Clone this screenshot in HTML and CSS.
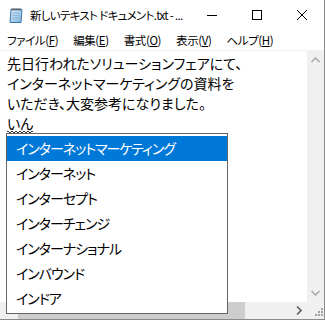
FILE: index.html
```html
<!DOCTYPE html>
<html lang="ja">
<head>
    <meta charset="UTF-8">
    <title>新しいテキスト ドキュメント.txt - メモ帳</title>
    <link rel="stylesheet" href="styles.css">
</head>
<body>

    <div class="window">

        <!-- Title bar -->
        <div class="titlebar">
            <svg class="app-icon" width="16" height="16" viewBox="0 0 16 16">
                <defs>
                    <linearGradient id="page" x1="0" y1="0" x2="1" y2="1">
                        <stop offset="0" stop-color="#d6ebfa"/>
                        <stop offset="1" stop-color="#7fb2dc"/>
                    </linearGradient>
                </defs>
                <path d="M3 2.5 H14 L13 15.5 H2 Z" fill="url(#page)" stroke="#3f76a8" stroke-width="1"/>
                <path d="M4.5 6 H11.5 M4.3 8.5 H11.3 M4.1 11 H11.1" stroke="#8fb6d6" stroke-width="1"/>
                <path d="M4 1 V3.5 M6 1 V3.5 M8 1 V3.5 M10 1 V3.5 M12 1 V3.5" stroke="#555" stroke-width="1"/>
            </svg>
            <span class="title">新しいテキスト ドキュメント.txt - ...</span>
            <div class="caption-buttons">
                <span class="cap-btn">
                    <svg width="10" height="10" viewBox="0 0 10 10"><path d="M0 5.5 H10" stroke="#000" stroke-width="1"/></svg>
                </span>
                <span class="cap-btn">
                    <svg width="10" height="10" viewBox="0 0 10 10"><rect x="0.5" y="0.5" width="9" height="9" fill="none" stroke="#000" stroke-width="1"/></svg>
                </span>
                <span class="cap-btn">
                    <svg width="10" height="10" viewBox="0 0 10 10"><path d="M0 0 L10 10 M10 0 L0 10" stroke="#000" stroke-width="1"/></svg>
                </span>
            </div>
        </div>

        <!-- Menu bar -->
        <ul class="menubar">
            <li>ファイル(<u>F</u>)</li>
            <li>編集(<u>E</u>)</li>
            <li>書式(<u>O</u>)</li>
            <li>表示(<u>V</u>)</li>
            <li>ヘルプ(<u>H</u>)</li>
        </ul>

        <!-- Edit area with scroll bars -->
        <div class="client">
            <div class="edit-text">
                <div>先日行われたソリューションフェアにて、</div>
                <div>インターネットマーケティングの資料を</div>
                <div>いただき、大変参考になりました。</div>
                <div><span class="composing">いん</span></div>
            </div>
            <div class="vscroll">
                <svg width="9" height="6" viewBox="0 0 9 6"><path d="M0.5 5 L4.5 1 L8.5 5" fill="none" stroke="#a3a3a3" stroke-width="1.4"/></svg>
                <svg width="9" height="6" viewBox="0 0 9 6"><path d="M0.5 1 L4.5 5 L8.5 1" fill="none" stroke="#a3a3a3" stroke-width="1.4"/></svg>
            </div>
            <div class="hscroll">
                <span class="hthumb"></span>
                <svg width="6" height="9" viewBox="0 0 6 9"><path d="M1 0.5 L5 4.5 L1 8.5" fill="none" stroke="#606060" stroke-width="1.6"/></svg>
            </div>
            <div class="grip">
                <svg width="12" height="12" viewBox="0 0 12 12" fill="#a0a0a0">
                    <rect x="9" y="1" width="2" height="2"/>
                    <rect x="6" y="4" width="2" height="2"/><rect x="9" y="4" width="2" height="2"/>
                    <rect x="3" y="7" width="2" height="2"/><rect x="6" y="7" width="2" height="2"/><rect x="9" y="7" width="2" height="2"/>
                </svg>
            </div>
        </div>

        <!-- IME candidate list -->
        <ul class="candidates">
            <li class="selected">インターネットマーケティング</li>
            <li>インターネット</li>
            <li>インターセプト</li>
            <li>インターチェンジ</li>
            <li>インターナショナル</li>
            <li>インバウンド</li>
            <li>インドア</li>
        </ul>

    </div>

</body>
</html>
```

FILE: styles.css
```css
/* General */
body {
    margin: 0;
    font-family: "Noto Sans CJK JP", "Noto Sans", sans-serif;
    font-feature-settings: "palt";
    color: #000;
    background-color: #fff;
}

.window {
    position: relative;
    width: 325px;
    height: 320px;
    box-sizing: border-box;
    border-right: 1px solid #8a8a8a;
    border-bottom: 1px solid #8a8a8a;
    display: flex;
    flex-direction: column;
    overflow: hidden;
}

/* Title bar */
.titlebar {
    height: 30px;
    display: flex;
    align-items: center;
    flex-shrink: 0;
}

.app-icon {
    flex-shrink: 0;
    margin-left: 8px;
    margin-right: 6px;
}

.title {
    font-size: 11.5px;
    letter-spacing: -0.7px;
    flex: 1;
    white-space: nowrap;
}

.caption-buttons {
    display: flex;
    height: 100%;
    flex-shrink: 0;
}

.cap-btn {
    width: 45px;
    display: flex;
    align-items: center;
    justify-content: center;
}

/* Menu bar */
.menubar {
    list-style: none;
    margin: 0;
    padding: 0;
    height: 20px;
    display: flex;
    align-items: center;
    font-size: 11.5px;
    letter-spacing: -0.4px;
    border-bottom: 1px solid #f0f0f0;
    flex-shrink: 0;
}

.menubar li {
    padding: 0 7px;
    margin-right: 1px;
}

/* Client area */
.client {
    flex: 1;
    display: grid;
    grid-template-columns: 1fr 17px;
    grid-template-rows: 1fr 17px;
}

.edit-text {
    padding: 2px 7px 0;
    font-size: 14px;
    line-height: 20px;
    white-space: nowrap;
    overflow: hidden;
}

/* IME composition string: dotted wavy underline */
.composing {
    display: inline-block;
    line-height: 16px;
    padding-bottom: 2px;
    background-image:
        linear-gradient(45deg, transparent 35%, #333 35%, #333 65%, transparent 65%),
        linear-gradient(-45deg, transparent 35%, #333 35%, #333 65%, transparent 65%);
    background-size: 4px 2px;
    background-position: 0 100%, 2px 100%;
    background-repeat: repeat-x;
}

.vscroll {
    background-color: #f0f0f0;
    display: flex;
    flex-direction: column;
    justify-content: space-between;
    align-items: center;
    padding: 6px 0;
}

.hscroll {
    background-color: #f0f0f0;
    display: flex;
    align-items: center;
    padding-left: 18px;
    padding-right: 5px;
}

.hthumb {
    width: 227px;
    height: 17px;
    background-color: #cdcdcd;
    margin-right: auto;
}

.grip {
    background-color: #f0f0f0;
    display: flex;
    align-items: flex-end;
    justify-content: flex-end;
}

/* Candidate window */
.candidates {
    position: absolute;
    left: 6px;
    top: 133px;
    width: 222px;
    box-sizing: border-box;
    margin: 0;
    padding: 2px 0;
    list-style: none;
    background-color: #fff;
    border: 1px solid #646464;
    font-size: 14px;
    letter-spacing: -1px;
}

.candidates li {
    height: 25px;
    line-height: 25px;
    padding-left: 9px;
    white-space: nowrap;
}

.candidates .selected {
    background-color: #0078d7;
    color: #fff;
}
```
